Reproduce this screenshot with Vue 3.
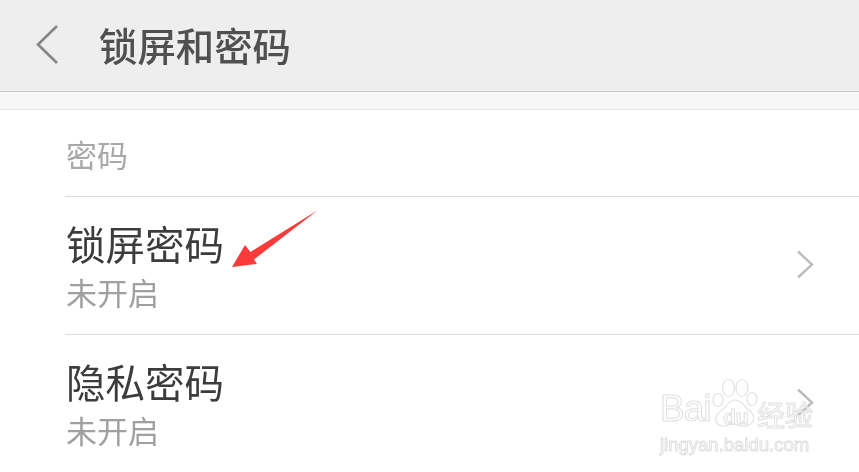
<template>
  <div class="page">
    <header class="top-bar">
      <svg class="back" width="24" height="40" viewBox="0 0 24 40">
        <path d="M22 2 L3 20.5 L22 39" fill="none" stroke="#868686" stroke-width="2.6" />
      </svg>
      <h1 class="title">锁屏和密码</h1>
    </header>
    <div class="gap"></div>

    <main class="list">
      <div class="section-name">密码</div>
      <div v-for="item in items" :key="item.name" class="row">
        <div class="row-text">
          <div class="row-name">{{ item.name }}</div>
          <div class="row-state">{{ item.state }}</div>
        </div>
        <svg class="chevron" width="18" height="30" viewBox="0 0 18 30">
          <path d="M2 1.5 L16 14.5 L2 27.5" fill="none" stroke="#bcbcbc" stroke-width="2.4" />
        </svg>
      </div>
    </main>

    <!-- 紅色箭頭標註 -->
    <svg class="pointer" width="100" height="70" viewBox="0 0 100 70">
      <polygon points="88,0 20.5,42 15,35 2,57 27,54 24,49.5" fill="#fb3a3a" />
    </svg>

    <!-- 百度經驗水印 -->
    <div class="watermark">
      <div class="mark-top">
        <span class="mark-bai">Bai</span>
        <svg class="paw" width="48" height="50" viewBox="0 0 48 50">
          <g fill="#fff" fill-opacity="0.55" stroke="#e2e2e2" stroke-width="1.2">
            <ellipse cx="6" cy="22" rx="5" ry="6.5" />
            <ellipse cx="16.5" cy="10" rx="6" ry="8.5" />
            <ellipse cx="30" cy="10" rx="6" ry="8.5" />
            <ellipse cx="40" cy="21" rx="5" ry="6.5" />
            <path d="M23 22 C30 22 32 29 38 33 C45 39 41 48 32 48 C27 48 25 46 22 46 C18 46 16 48 11 48 C3 48 1 38 9 33 C15 29 16 22 23 22 Z" />
          </g>
        </svg>
        <span class="mark-du">du</span>
        <span class="mark-cn">经验</span>
      </div>
      <div class="mark-url">jingyan.baidu.com</div>
    </div>
  </div>
</template>

<script setup>
const items = [
  { name: "锁屏密码", state: "未开启" },
  { name: "隐私密码", state: "未开启" },
];
</script>

<style>
html,
body {
  margin: 0;
  overflow: hidden;
  background: #fff;
}
</style>

<style scoped>
.page {
  position: relative;
  width: 859px;
  height: 472px;
  overflow: hidden;
  background: #fff;
  font-family: "Noto Sans CJK SC", "Liberation Sans", sans-serif;
}

.top-bar {
  height: 91px;
  display: flex;
  align-items: center;
  padding-left: 35px;
  background: #eeeeee;
  border-bottom: 1px solid #c9c9c9;
  box-sizing: content-box;
}

.back {
  margin-top: -3px;
}

.title {
  margin: -3px 0 0 40px;
  font-size: 38.4px;
  font-weight: 500;
  line-height: 50px;
  color: #505050;
  filter: blur(0.35px);
}

.gap {
  height: 17px;
  background: #f7f7f7;
  border-bottom: 1px solid #e4e4e4;
}

.list {
  padding-left: 65px;
}

.section-name {
  height: 86px;
  padding-left: 1px;
  display: flex;
  align-items: center;
  font-size: 31px;
  color: #a8a8a8;
  border-bottom: 1px solid #dcdcdc;
  box-sizing: content-box;
}

.section-name,
.row-text {
  filter: blur(0.35px);
}

.row {
  height: 137px;
  display: flex;
  align-items: center;
  justify-content: space-between;
  padding: 0 45px 0 1px;
  border-bottom: 1px solid #dcdcdc;
}

.row-name {
  font-size: 39.5px;
  line-height: 50px;
  color: #3c3c3c;
}

.row-state {
  margin-top: 3px;
  font-size: 31px;
  line-height: 42px;
  color: #a0a0a0;
}

.chevron {
  margin-top: -2px;
}

.pointer {
  position: absolute;
  left: 230px;
  top: 210px;
}

.watermark {
  position: absolute;
  left: 660px;
  top: 378px;
  width: 156px;
  font-family: "Liberation Sans", "Noto Sans CJK SC", sans-serif;
  color: rgba(255, 255, 255, 0.5);
  -webkit-text-stroke: 1px #e0e0e0;
  filter: blur(0.4px);
}

.mark-top {
  position: relative;
  height: 54px;
  display: flex;
  align-items: flex-end;
}

.mark-bai {
  font-size: 37px;
  line-height: 46px;
  font-weight: 400;
  letter-spacing: -1px;
}

.paw {
  position: absolute;
  left: 52px;
  top: 0;
}

.mark-du {
  position: absolute;
  left: 63px;
  top: 27px;
  font-size: 21px;
  line-height: 24px;
  font-weight: 700;
}

.mark-cn {
  position: absolute;
  left: 97px;
  top: 20px;
  font-size: 28px;
  line-height: 32px;
  font-family: "Noto Sans CJK SC", sans-serif;
}

.mark-url {
  margin-top: 2px;
  font-size: 18.5px;
  line-height: 22px;
  white-space: nowrap;
}
</style>
